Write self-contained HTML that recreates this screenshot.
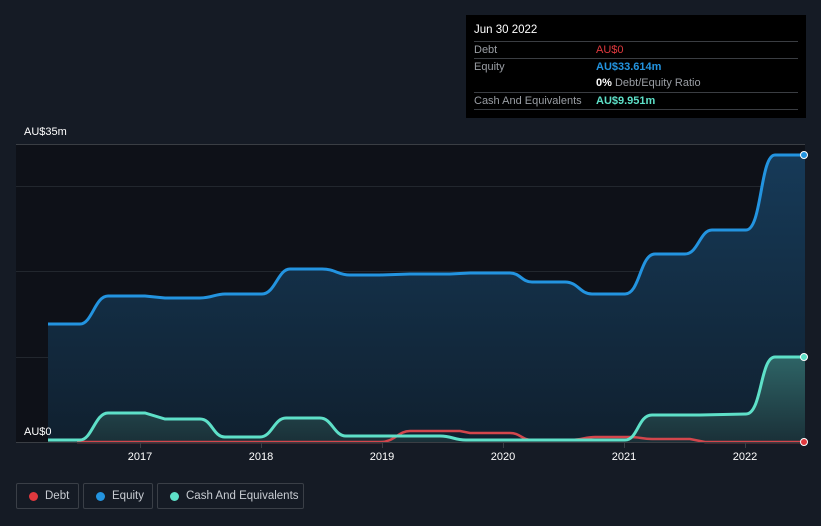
<!DOCTYPE html>
<html><head><style>
html,body{margin:0;width:821px;height:526px;overflow:hidden}
body{background:#151b25;font-family:"Liberation Sans",sans-serif;position:relative}
.tip{position:absolute;left:466px;top:15px;width:340px;height:103px;background:#000;color:#fff;font-size:11px}
.tip .r{position:absolute;left:8px;width:324px;border-top:1px solid #3a3d42;height:17px}
.tip span{position:absolute;top:2px;white-space:nowrap}
.lg{position:absolute;top:483px;height:26px;border:1px solid #3a3f47;border-radius:2px;color:#c8ccd2;font-size:11.5px;line-height:24px;box-sizing:border-box;white-space:nowrap}
.lg i{position:absolute;left:12px;top:8px;width:9px;height:9px;border-radius:50%}
</style></head><body>
<svg width="821" height="526" style="position:absolute;left:0;top:0">
<defs>
<linearGradient id="ge" x1="0" y1="0" x2="0" y2="1"><stop offset="0" stop-color="#163a58"/><stop offset="1" stop-color="#10202f"/></linearGradient>
<linearGradient id="gc" x1="0" y1="0" x2="0" y2="1"><stop offset="0" stop-color="#2e6466"/><stop offset="1" stop-color="#1a3038"/></linearGradient>
</defs>
<rect x="16" y="144" width="789" height="298" fill="#0e1118"/>
<line x1="16" y1="144.5" x2="805" y2="144.5" stroke="#3a3e44"/>
<line x1="16" y1="186.5" x2="805" y2="186.5" stroke="#22272e"/>
<line x1="16" y1="271.5" x2="805" y2="271.5" stroke="#22272e"/>
<line x1="16" y1="357.5" x2="805" y2="357.5" stroke="#22272e"/>
<path d="M48,324 L80,324 C92,324 95,296 108,296 L145,296 L165,298 L200,298 C212,298 215,294 225,294 L262,294 C275,294 278,269 290,269 L322,269 C335,269 338,275 350,275 L380,275 L410,274 L450,274 L470,273 L510,273 C520,273 522,282 532,282 L565,282 C578,282 580,294 592,294 L625,294 C640,294 640,254 655,254 L685,254 C698,254 700,230 712,230 L746,230 C762,230 760,155 775,155 L805,155 L805,442 L48,442 Z" fill="url(#ge)"/>
<path d="M48,324 L80,324 C92,324 95,296 108,296 L145,296 L165,298 L200,298 C212,298 215,294 225,294 L262,294 C275,294 278,269 290,269 L322,269 C335,269 338,275 350,275 L380,275 L410,274 L450,274 L470,273 L510,273 C520,273 522,282 532,282 L565,282 C578,282 580,294 592,294 L625,294 C640,294 640,254 655,254 L685,254 C698,254 700,230 712,230 L746,230 C762,230 760,155 775,155 L805,155" fill="none" stroke="#2394e0" stroke-width="3"/>
<path d="M48,440 L80,440 C92,440 95,413 108,413 L145,413 L165,419 L200,419 C212,419 213,437 225,437 L260,437 C272,437 274,418 286,418 L320,418 C332,418 334,436 346,436 L440,436 C452,436 454,440 466,440 L625,440 C638,440 638,415 652,415 L700,415 L746,414 C762,414 760,357 775,357 L805,357 L805,442 L48,442 Z" fill="url(#gc)"/>
<path d="M77,442 L380,442 C395,442 398,431 410,431 L460,431 L470,433 L510,433 C520,433 522,440 532,440 L570,440 C582,440 585,437 595,437 L630,437 C640,437 642,439 652,439 L690,439 L705,442 L805,442" fill="none" stroke="#d2464c" stroke-width="2.5"/>
<path d="M48,440 L80,440 C92,440 95,413 108,413 L145,413 L165,419 L200,419 C212,419 213,437 225,437 L260,437 C272,437 274,418 286,418 L320,418 C332,418 334,436 346,436 L440,436 C452,436 454,440 466,440 L625,440 C638,440 638,415 652,415 L700,415 L746,414 C762,414 760,357 775,357 L805,357" fill="none" stroke="#5ee0c8" stroke-width="3"/>
<line x1="16" y1="442.5" x2="805" y2="442.5" stroke="#3a3e44"/>
<g stroke="#3a3e44"><line x1="140.5" y1="443" x2="140.5" y2="448"/><line x1="261.5" y1="443" x2="261.5" y2="448"/><line x1="382.5" y1="443" x2="382.5" y2="448"/><line x1="503.5" y1="443" x2="503.5" y2="448"/><line x1="624.5" y1="443" x2="624.5" y2="448"/><line x1="745.5" y1="443" x2="745.5" y2="448"/></g>
<circle cx="804" cy="155" r="3.5" fill="#2394e0" stroke="#fff" stroke-width="1"/>
<circle cx="804" cy="357" r="3.5" fill="#5ee0c8" stroke="#fff" stroke-width="1"/>
<circle cx="804" cy="442" r="3.5" fill="#e0393e" stroke="#fff" stroke-width="1"/>
<g fill="#fff" font-size="11" font-family="Liberation Sans"><text x="24" y="135">AU$35m</text><text x="24" y="435">AU$0</text>
<g text-anchor="middle"><text x="140" y="460">2017</text><text x="261" y="460">2018</text><text x="382" y="460">2019</text><text x="503" y="460">2020</text><text x="624" y="460">2021</text><text x="745" y="460">2022</text></g></g>
</svg>
<div class="tip">
<div style="position:absolute;left:8px;top:9px;font-size:11.5px">Jun 30 2022</div>
<div class="r" style="top:26px"><span style="color:#9a9ea4">Debt</span><span style="left:122px;color:#e0393e">AU$0</span></div>
<div class="r" style="top:43px"><span style="color:#9a9ea4">Equity</span><span style="left:122px;color:#2394e0;font-weight:bold">AU$33.614m</span></div>
<div class="r" style="top:60px;border-top:none"><span style="left:122px;color:#9a9ea4"><b style="color:#fff">0%</b> Debt/Equity Ratio</span></div>
<div class="r" style="top:77px"><span style="color:#9a9ea4">Cash And Equivalents</span><span style="left:122px;color:#5ee0c8;font-weight:bold">AU$9.951m</span></div>
<div class="r" style="top:94px;height:0"></div>
</div>
<div class="lg" style="left:16px;width:63px"><i style="background:#e0393e"></i><span style="position:absolute;left:28px">Debt</span></div>
<div class="lg" style="left:83px;width:70px"><i style="background:#2394e0"></i><span style="position:absolute;left:28px">Equity</span></div>
<div class="lg" style="left:157px;width:147px"><i style="background:#5ee0c8"></i><span style="position:absolute;left:28px">Cash And Equivalents</span></div>
</body></html>
